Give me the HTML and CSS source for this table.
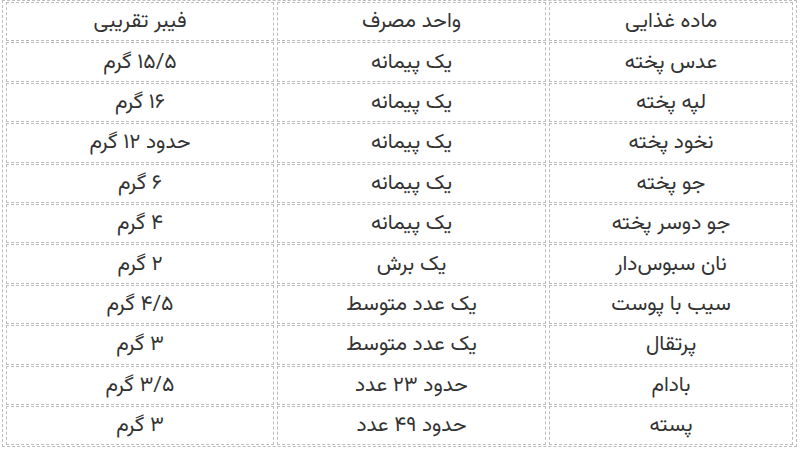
FILE: index.html
```html
<!DOCTYPE html>
<html lang="fa" dir="rtl">
<head>
<meta charset="utf-8">
<title>فیبر مواد غذایی</title>
<link rel="stylesheet" href="styles.css">
</head>
<body>
<table class="fiber">
  <colgroup>
    <col class="c-food">
    <col class="c-unit">
    <col class="c-fiber">
  </colgroup>
  <tr><td><div class="cell">ماده غذایی</div></td><td><div class="cell">واحد مصرف</div></td><td><div class="cell">فیبر تقریبی</div></td></tr>
  <tr><td><div class="cell">عدس پخته</div></td><td><div class="cell">یک پیمانه</div></td><td><div class="cell">۱۵/۵ گرم</div></td></tr>
  <tr><td><div class="cell">لپه پخته</div></td><td><div class="cell">یک پیمانه</div></td><td><div class="cell">۱۶ گرم</div></td></tr>
  <tr><td><div class="cell">نخود پخته</div></td><td><div class="cell">یک پیمانه</div></td><td><div class="cell">حدود ۱۲ گرم</div></td></tr>
  <tr><td><div class="cell">جو پخته</div></td><td><div class="cell">یک پیمانه</div></td><td><div class="cell">۶ گرم</div></td></tr>
  <tr><td><div class="cell">جو دوسر پخته</div></td><td><div class="cell">یک پیمانه</div></td><td><div class="cell">۴ گرم</div></td></tr>
  <tr><td><div class="cell">نان سبوس‌دار</div></td><td><div class="cell">یک برش</div></td><td><div class="cell">۲ گرم</div></td></tr>
  <tr><td><div class="cell">سیب با پوست</div></td><td><div class="cell">یک عدد متوسط</div></td><td><div class="cell">۴/۵ گرم</div></td></tr>
  <tr><td><div class="cell">پرتقال</div></td><td><div class="cell">یک عدد متوسط</div></td><td><div class="cell">۳ گرم</div></td></tr>
  <tr><td><div class="cell">بادام</div></td><td><div class="cell">حدود ۲۳ عدد</div></td><td><div class="cell">۳/۵ گرم</div></td></tr>
  <tr><td><div class="cell">پسته</div></td><td><div class="cell">حدود ۴۹ عدد</div></td><td><div class="cell">۳ گرم</div></td></tr>
</table>
</body>
</html>
```
FILE: styles.css
```css
html, body {
  margin: 0;
  padding: 0;
  background: #ffffff;
}
body {
  font-family: "Vazirmatn", "Noto Sans Arabic", "DejaVu Sans", sans-serif;
  color: #333333;
}
.fiber {
  direction: rtl;
  width: 795px;
  margin: 0 3px 0 2px;
  border: 1px dashed #bdbdbd;
  border-collapse: separate;
  border-spacing: 3px 1px;
  table-layout: fixed;
}
.c-food { width: 244px; }
.c-unit { width: 269px; }
.c-fiber { width: 268px; }
.fiber td {
  border: 1px dashed #bdbdbd;
  padding: 0;
  vertical-align: middle;
}
.cell {
  height: 37.4px;
  overflow: hidden;
  display: flex;
  align-items: center;
  justify-content: center;
  font-size: 21px;
  line-height: 1;
  white-space: nowrap;
}
```
